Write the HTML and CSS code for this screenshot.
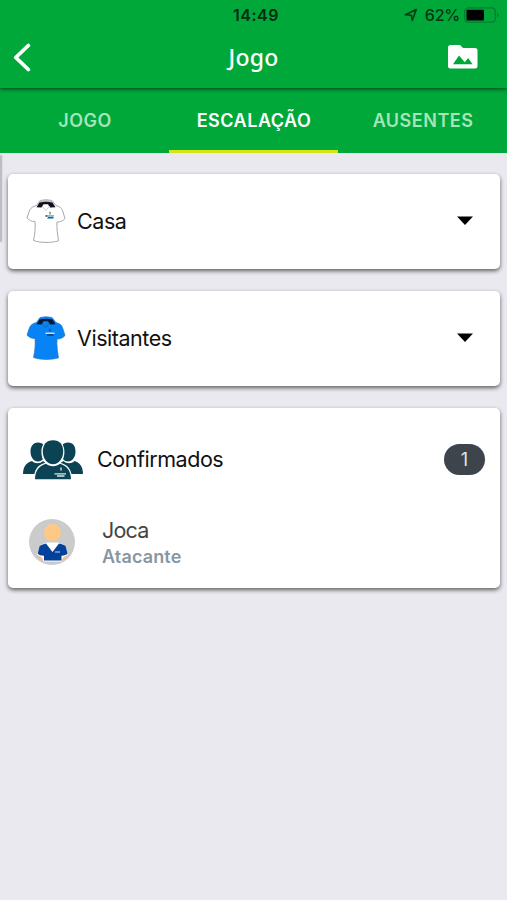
FILE: index.html
```html
<!DOCTYPE html>
<html lang="pt-BR">
<head>
<meta charset="utf-8">
<title>Jogo</title>
<meta name="viewport" content="width=device-width, initial-scale=1">
<link rel="stylesheet" href="styles.css">
</head>
<body>
<header class="header">
  <div class="status">
    <span></span>
    <span class="clock">14:49</span>
    <div class="status-right">
      <svg class="location" width="14" height="14" viewBox="0 0 14 14"><path d="M1.300 6.800 12.300 1.500 8.300 12.400 7.300 7.200Z" fill="none" stroke="#043d18" stroke-width="1.600" stroke-linejoin="round"/></svg>
      <span class="percent">62%</span>
      <svg class="battery" width="36" height="16" viewBox="0 0 36 16"><rect x=".8" y=".8" width="30.500" height="14.400" rx="3.500" fill="none" stroke="#077b2c" stroke-width="1.300"/><rect x="2.500" y="2.700" width="17.500" height="10.700" rx="1" fill="#000"/><path d="M33 5.600c2.400.7 2.400 4.100 0 4.800Z" fill="#077b2c"/></svg>
    </div>
  </div>
  <div class="navbar">
    <svg class="back" width="18" height="30" viewBox="0 0 18 30"><path d="M15.300 3.500 2.800 15.500 15.300 27.500" fill="none" stroke="#fff" stroke-width="3.800" stroke-linecap="round" stroke-linejoin="round"/></svg>
    <h1 class="title">Jogo</h1>
    <svg class="gallery" width="30" height="25" viewBox="0 0 30 25"><path fill="#fff" fill-rule="evenodd" d="M2.500 0H12l3 3h12a2.500 2.500 0 0 1 2.500 2.500V21a2.500 2.500 0 0 1-2.500 2.500H2.500A2.500 2.500 0 0 1 0 21V2.500A2.500 2.500 0 0 1 2.500 0ZM5 19.200h19.500L20.200 13l-3.400 4.200L11 10.500Z"/></svg>
  </div>
</header>
<nav class="tabs">
  <a class="tab">JOGO</a>
  <a class="tab active">ESCALAÇÃO</a>
  <a class="tab">AUSENTES</a>
</nav>
<main class="content">
  <div class="scroll-thumb"></div>
  <section class="card team">
    <svg class="shirt" width="40" height="45" viewBox="0 0 40 45">
      <path d="M10.500 6.500 14 1.500q6-1.500 12 0l4 5c3.500 1.200 5.500 2 6.500 5L39 19.500c-2 2.300-4.500 3.600-8 3.500-.5 6 .6 13 1.500 18.800C26 44 14 44 7.500 41.500 9 35 9.500 28 9 22.500c-3.500.2-6-1.300-8-3.500l2.500-7.500c1.500-3 3.500-4 7-5Z" fill="#fff" stroke="#a8a8a8"/>
      <path d="m11.500 5 2.500-3.500q6-1.500 12 0L29 5l-4-2H15Z" fill="#c2c2c2"/>
      <path d="M13.500 3.500q6.500-1.500 13 0l3 4.700-5.500.3-2-3.200h-4.500l-2 3.300-5-.3Z" fill="#10131c"/>
      <path d="m16 7 3.700 4.500L23.700 7" fill="none" stroke="#c4c4c4" stroke-width=".8"/>
      <path d="M24 15.500v-2.700" stroke="#43494d"/><path d="M19.500 17h2M22 18.400h5.500" stroke="#123e59" stroke-width="1.500"/><path d="M21 16.800h7M21 19.200h6" stroke="#4aa5df"/>
    </svg>
    <h2 class="label">Casa</h2>
    <svg class="caret" width="18" height="10" viewBox="0 0 18 10"><path d="M1 .5h16L9 9Z"/></svg>
  </section>
  <section class="card team">
    <svg class="shirt" width="40" height="45" viewBox="0 0 40 45">
      <path d="M10.500 6.500 14 1.500q6-1.500 12 0l4 5c3.500 1.200 5.500 2 6.500 5L39 19.500c-2 2.300-4.500 3.600-8 3.500-.5 6 .6 13 1.500 18.800C26 44 14 44 7.500 41.500 9 35 9.500 28 9 22.500c-3.500.2-6-1.300-8-3.500l2.500-7.500c1.500-3 3.500-4 7-5Z" fill="#0783f5" stroke="#2879b9" stroke-width=".7"/>
      <path d="M13.500 3.500q6.500-1.500 13 0l3 4.700-5.500.3-2-3.200h-4.500l-2 3.300-5-.3Z" fill="#061a34"/>
      <path d="m16 7 3.700 4.500L23.700 7" fill="none" stroke="#0663bb" stroke-width=".8"/>
      <path d="M24 15.500v-2.700" stroke="#063d80"/><path d="M19.500 17.200h9" stroke="#d9f0ff" stroke-width="1.300"/><path d="M21 19h6.500" stroke="#073b75" stroke-width="1.500"/>
    </svg>
    <h2 class="label">Visitantes</h2>
    <svg class="caret" width="18" height="10" viewBox="0 0 18 10"><path d="M1 .5h16L9 9Z"/></svg>
  </section>
  <section class="card confirmed">
    <div class="confirmed-head">
      <svg class="group" width="60" height="40" viewBox="0 0 60 40" fill="#0b4354">
        <path d="M15 2.500c5.500 0 7.500 4 7.500 9 0 5.500-3 10-7.500 10s-7.500-4.500-7.500-10c0-5 2.500-9 7.500-9ZM45 2.500c5.500 0 7.500 4 7.500 9 0 5.500-3 10-7.500 10s-7.500-4.500-7.500-10c0-5 2-9 7.500-9Z"/>
        <path d="M0 34c0-7 3-11.500 9-13 3 3 8 3 11 0l5 4v9ZM60 34c0-7-3-11.500-8.500-13-3 3-8 3-11 0l-6 4v9Z"/>
        <path d="M11 40c0-10 3-15 11.500-17.200-3.300-3-4.100-7-4.100-11C18.400 4 23-.5 30-.5s11.400 4.500 11.400 12.300c0 4-.8 8-4.100 11C45.500 25 49 30 49 40Z" fill="#fff"/>
        <path d="M30 .2c6.800 0 10.200 4.500 10.200 11.300 0 7-4.500 12.700-10.200 12.700s-10.200-5.700-10.200-12.700C19.800 4.700 23.200.2 30 .2Z"/>
        <path d="M12 39.200c.3-8.500 3.500-13 11-15.400 3.500 3.200 10.500 3.200 14 0 7.500 2.400 10.700 6.900 11 15.400Z"/>
        <path d="M38 27.500v3M37.300 29.500h1.400M31.500 33.800h11.500M34 36h7.500" fill="none" stroke="#d8e9ec" stroke-width="1.300"/>
      </svg>
      <h2 class="label">Confirmados</h2>
      <span class="badge">1</span>
    </div>
    <div class="player">
      <svg class="avatar" width="46" height="46" viewBox="0 0 46 46">
        <circle cx="23" cy="23" r="23" fill="#cbcbcb"/>
        <path d="M9.500 36.500h5v6q-3-1.500-5-4ZM37.500 36.500h-5v6q3-1.500 5-4Z" fill="#f5be86"/>
        <path d="M8 35.500 11.500 26l6-2.500h12l6 2.500L39 35.500l-5 3-1.500 4h-18l-1.500-4Z" fill="#fff"/>
        <path d="m8.700 34.500 2-7.500q1.500-1.500 6.300-2.500L23.500 33l6.500-8.500q5 1 6.500 2.500l2 7.500q-1.500 2-6 2.200V41.500H15v-4.800q-4.500 0-6.300-2.200Z" fill="#03419b"/>
        <path d="M26 33h5" stroke="#c7d7f4"/><circle cx="23.500" cy="13.500" r="8.500" fill="#ffc983"/>
      </svg>
      <div class="player-text"><span class="name">Joca</span><span class="position">Atacante</span></div>
    </div>
  </section>
</main>
</body>
</html>
```

FILE: styles.css
```css
* { box-sizing: border-box; }
body {
  margin: 0;
  min-height: 900px;
  background: #eae9ef;
  font-family: Inter, "Liberation Sans", sans-serif;
  color: #111;
}
h1, h2 { margin: 0; font-weight: 400; }
svg { display: block; flex: none; }
.header {
  position: relative;
  height: 88px;
  background: #00a83a;
  box-shadow: 0 1px 4px rgba(0, 35, 8, .8);
}
.status {
  display: grid;
  grid-template-columns: 1fr auto 1fr;
  align-items: center;
  height: 30px;
  padding-right: 7px;
  padding-left: 12px;
}
.clock { font-size: 16px; font-weight: 600; line-height: 30px; letter-spacing: .5px; color: #032b11; }
.status-right { display: flex; justify-content: flex-end; align-items: center; }
.location { margin-right: 7px; }
.percent { margin-right: 4px; font-size: 16px; font-weight: 500; letter-spacing: -.2px; color: #033615; }
.navbar {
  display: grid;
  grid-template-columns: 1fr auto 1fr;
  align-items: center;
  height: 54px;
  padding: 0 29px 0 13px;
}
.title {
  margin-right: -16px;
  font: 500 23px/32px "Noto Sans", sans-serif;
  letter-spacing: .2px;
  color: #fff;
}
.gallery { justify-self: end; }
.tabs {
  display: grid;
  grid-template-columns: repeat(3, 1fr);
  height: 65px;
  background: #00a83a;
}
.tab {
  display: flex;
  align-items: center;
  justify-content: center;
  border-bottom: 3px solid transparent;
  padding-top: 3px;
  padding-left: 1px;
  font-size: 18px;
  font-weight: 600;
  letter-spacing: .5px;
  color: #a5e5ba;
}
.tab.active { border-color: #d2e51b; color: #fff; }
.content {
  position: relative;
  display: flex;
  flex-direction: column;
  gap: 22px;
  padding: 21px 7px 0 8px;
}
.scroll-thumb {
  position: absolute;
  left: 0;
  top: 2px;
  width: 2px;
  height: 87px;
  border-radius: 0 2px 2px 0;
  background: #bebdc6;
  box-shadow: 0 0 2px #bebdc6;
}
.card {
  border-radius: 5px;
  background: #fff;
  box-shadow: 0 2px 4px rgba(0, 0, 0, .6);
}
.team { display: flex; align-items: center; height: 95px; padding: 0 26px 2px 18px; }
.shirt { margin-top: 1px; }
.team .label { margin-left: 11px; }
.label { font-size: 21.5px; line-height: 30px; letter-spacing: -.45px; }
.caret { margin-left: auto; }
.confirmed { height: 180px; padding: 31px 15px 0; }
.confirmed-head { display: flex; align-items: center; height: 41px; }
.confirmed-head .label { margin-top: -2px; margin-left: 14px; }
.badge {
  display: flex;
  align-items: center;
  justify-content: center;
  width: 41px;
  height: 31px;
  margin-left: auto;
  border-radius: 16px;
  background: #3e444c;
  color: #e2e3e6;
  font-size: 18px;
}
.player { display: flex; align-items: center; margin-top: 37px; padding-left: 6px; }
.avatar { margin-top: -4px; }
.player-text { display: flex; flex-direction: column; margin-left: 27px; }
.name { font-size: 21.5px; line-height: 26px; letter-spacing: -.8px; color: #444; }
.position { font-size: 18px; line-height: 27px; font-weight: 600; letter-spacing: .15px; color: #8797a1; }
```
